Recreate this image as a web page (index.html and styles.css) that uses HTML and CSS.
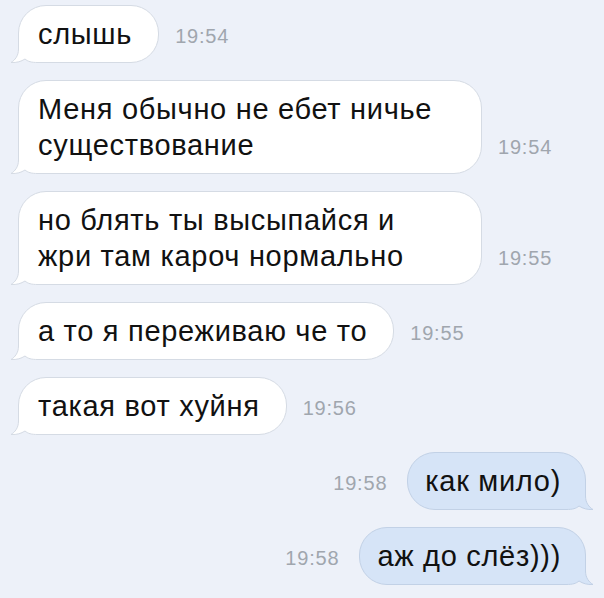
FILE: index.html
```html
<!DOCTYPE html>
<html lang="ru">
<head>
    <meta charset="UTF-8">
    <meta name="viewport" content="width=device-width, initial-scale=1.0">
    <title>Сообщения</title>
    <link rel="stylesheet" href="styles.css">
</head>
<body>
    <div class="chat">
        <!-- incoming -->
        <div class="row">
            <div class="bubble in">
                <svg class="tail" width="40" height="30" viewBox="0 0 40 30"><path class="tail-fill" d="M10.5,0 V16 C10.5,23 7,27 3,29.5 C9,29.8 13,28.5 17,26 C20,28.5 23,29.5 30,29.5 H40 V0 Z"/><path class="tail-line" d="M10.5,0 V16 C10.5,23 7,27 3,29.5 C9,29.8 13,28.5 17,26 C20,28.5 23,29.5 30,29.5 H40"/></svg>
                <span class="text">слышь</span>
            </div>
            <span class="time">19:54</span>
        </div>

        <div class="row">
            <div class="bubble in wide">
                <svg class="tail" width="40" height="30" viewBox="0 0 40 30"><path class="tail-fill" d="M10.5,0 V16 C10.5,23 7,27 3,29.5 C9,29.8 13,28.5 17,26 C20,28.5 23,29.5 30,29.5 H40 V0 Z"/><path class="tail-line" d="M10.5,0 V16 C10.5,23 7,27 3,29.5 C9,29.8 13,28.5 17,26 C20,28.5 23,29.5 30,29.5 H40"/></svg>
                <span class="text">Меня обычно не ебет ничье существование</span>
            </div>
            <span class="time">19:54</span>
        </div>

        <div class="row">
            <div class="bubble in wide">
                <svg class="tail" width="40" height="30" viewBox="0 0 40 30"><path class="tail-fill" d="M10.5,0 V16 C10.5,23 7,27 3,29.5 C9,29.8 13,28.5 17,26 C20,28.5 23,29.5 30,29.5 H40 V0 Z"/><path class="tail-line" d="M10.5,0 V16 C10.5,23 7,27 3,29.5 C9,29.8 13,28.5 17,26 C20,28.5 23,29.5 30,29.5 H40"/></svg>
                <span class="text">но блять ты высыпайся и жри там кароч нормально</span>
            </div>
            <span class="time">19:55</span>
        </div>

        <div class="row">
            <div class="bubble in">
                <svg class="tail" width="40" height="30" viewBox="0 0 40 30"><path class="tail-fill" d="M10.5,0 V16 C10.5,23 7,27 3,29.5 C9,29.8 13,28.5 17,26 C20,28.5 23,29.5 30,29.5 H40 V0 Z"/><path class="tail-line" d="M10.5,0 V16 C10.5,23 7,27 3,29.5 C9,29.8 13,28.5 17,26 C20,28.5 23,29.5 30,29.5 H40"/></svg>
                <span class="text">а то я переживаю че то</span>
            </div>
            <span class="time">19:55</span>
        </div>

        <div class="row">
            <div class="bubble in">
                <svg class="tail" width="40" height="30" viewBox="0 0 40 30"><path class="tail-fill" d="M10.5,0 V16 C10.5,23 7,27 3,29.5 C9,29.8 13,28.5 17,26 C20,28.5 23,29.5 30,29.5 H40 V0 Z"/><path class="tail-line" d="M10.5,0 V16 C10.5,23 7,27 3,29.5 C9,29.8 13,28.5 17,26 C20,28.5 23,29.5 30,29.5 H40"/></svg>
                <span class="text">такая вот хуйня</span>
            </div>
            <span class="time">19:56</span>
        </div>

        <!-- outgoing -->
        <div class="row out">
            <span class="time">19:58</span>
            <div class="bubble mine">
                <svg class="tail" width="40" height="30" viewBox="0 0 40 30"><path class="tail-fill" d="M10.5,0 V16 C10.5,23 7,27 3,29.5 C9,29.8 13,28.5 17,26 C20,28.5 23,29.5 30,29.5 H40 V0 Z"/><path class="tail-line" d="M10.5,0 V16 C10.5,23 7,27 3,29.5 C9,29.8 13,28.5 17,26 C20,28.5 23,29.5 30,29.5 H40"/></svg>
                <span class="text">как мило)</span>
            </div>
        </div>

        <div class="row out">
            <span class="time">19:58</span>
            <div class="bubble mine">
                <svg class="tail" width="40" height="30" viewBox="0 0 40 30"><path class="tail-fill" d="M10.5,0 V16 C10.5,23 7,27 3,29.5 C9,29.8 13,28.5 17,26 C20,28.5 23,29.5 30,29.5 H40 V0 Z"/><path class="tail-line" d="M10.5,0 V16 C10.5,23 7,27 3,29.5 C9,29.8 13,28.5 17,26 C20,28.5 23,29.5 30,29.5 H40"/></svg>
                <span class="text">аж до слёз)))</span>
            </div>
        </div>
    </div>
</body>
</html>
```

FILE: styles.css
```css
body {
    margin: 0;
    background-color: #edf1f9;
    font-family: "Liberation Sans", Arial, sans-serif;
    color: #111;
}
.chat {
    display: flex;
    flex-direction: column;
    gap: 17px;
    padding: 5px 18px 0 18px;
}
.row {
    display: flex;
    align-items: flex-end;
}
.row.out {
    justify-content: flex-end;
}
.bubble {
    position: relative;
    box-sizing: border-box;
    padding: 10px 26px 10px 19px;
    border: 1px solid #d5dbe4;
    border-radius: 28px;
    background-color: #fff;
    font-size: 29px;
    line-height: 36px;
    letter-spacing: 0.7px;
}
.bubble.wide {
    width: 464px;
    padding-right: 36px;
}
.bubble.mine {
    padding: 10px 24px 10px 17px;
    background-color: #d6e4f7;
    border-color: #c2d1e6;
}
.text {
    position: relative;
}
.tail {
    position: absolute;
    left: -11px;
    bottom: -1px;
}
.tail-fill {
    fill: #fff;
}
.tail-line {
    fill: none;
    stroke: #d5dbe4;
    stroke-width: 1;
}
.mine .tail {
    left: auto;
    right: -11px;
    transform: scaleX(-1);
}
.mine .tail-fill {
    fill: #d6e4f7;
}
.mine .tail-line {
    stroke: #c2d1e6;
}
.time {
    margin-left: 16px;
    padding-bottom: 9px;
    font-size: 20px;
    line-height: 36px;
    letter-spacing: 0.8px;
    color: #a0a6ae;
}
.out .time {
    margin-left: 0;
    margin-right: 20px;
}
```
